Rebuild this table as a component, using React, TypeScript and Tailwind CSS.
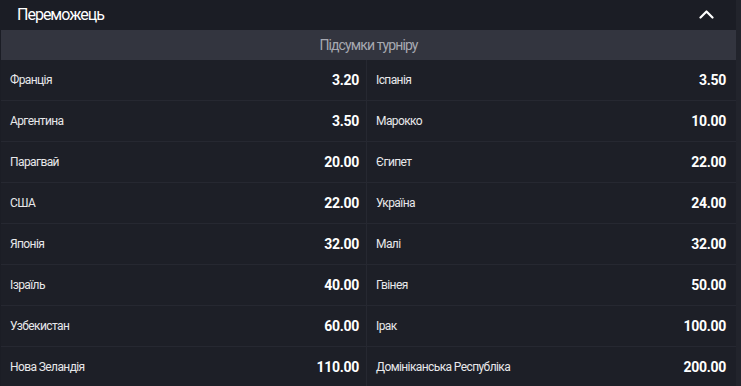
const rows: [string, string, string, string][] = [
  ["Франція", "3.20", "Іспанія", "3.50"],
  ["Аргентина", "3.50", "Марокко", "10.00"],
  ["Парагвай", "20.00", "Єгипет", "22.00"],
  ["США", "22.00", "Україна", "24.00"],
  ["Японія", "32.00", "Малі", "32.00"],
  ["Ізраїль", "40.00", "Гвінея", "50.00"],
  ["Узбекистан", "60.00", "Ірак", "100.00"],
  ["Нова Зеландія", "110.00", "Домініканська Республіка", "200.00"],
];

function Cell({ name, odd, right }: { name: string; odd: string; right?: boolean }) {
  return (
    <div
      className={
        right
          ? "flex h-[41px] items-center justify-between border-b border-[#262831] pl-[9px] pr-[10px]"
          : "flex h-[41px] items-center justify-between border-b border-[#262831] pl-[9px] pr-[7px]"
      }
    >
      <span className="text-[12px] tracking-[-0.6px] text-[#e8e8ea]">{name}</span>
      <span className="text-[14px] font-bold tracking-[-0.3px] text-white">{odd}</span>
    </div>
  );
}

export default function App() {
  return (
    <div
      className="flex h-[386px] w-[741px] overflow-hidden bg-[#1b1d25]"
      style={{ fontFamily: "Roboto, 'Noto Sans', sans-serif" }}
    >
      <div className="w-[736px] pl-[1px]">
        {/* Header */}
        <div className="flex h-[30px] items-center justify-between pl-[16px] pr-[22px]">
          <span className="text-[16px] tracking-[-1px] text-white">Переможець</span>
          <svg width="15" height="9" viewBox="0 0 15 9" fill="none" className="-mt-[2px]">
            <path d="M1.5 7.5L7.5 1.5L13.5 7.5" stroke="white" strokeWidth="2.2" strokeLinecap="round" strokeLinejoin="round" />
          </svg>
        </div>

        {/* Sub header */}
        <div className="flex h-[30px] items-center justify-center bg-[#33353f]">
          <span className="text-[14px] tracking-[-0.9px] text-[#a7a9b1]">Підсумки турніру</span>
        </div>

        {/* Table */}
        <div className="grid grid-cols-[366px_1fr] bg-[#1d1f27]">
          {rows.map((r) => (
            <div key={r[0]} className="contents">
              <div className="border-r border-[#262831]">
                <Cell name={r[0]} odd={r[1]} />
              </div>
              <Cell name={r[2]} odd={r[3]} right />
            </div>
          ))}
        </div>
      </div>
      <div className="w-[5px] bg-[#22242c]" />
    </div>
  );
}
